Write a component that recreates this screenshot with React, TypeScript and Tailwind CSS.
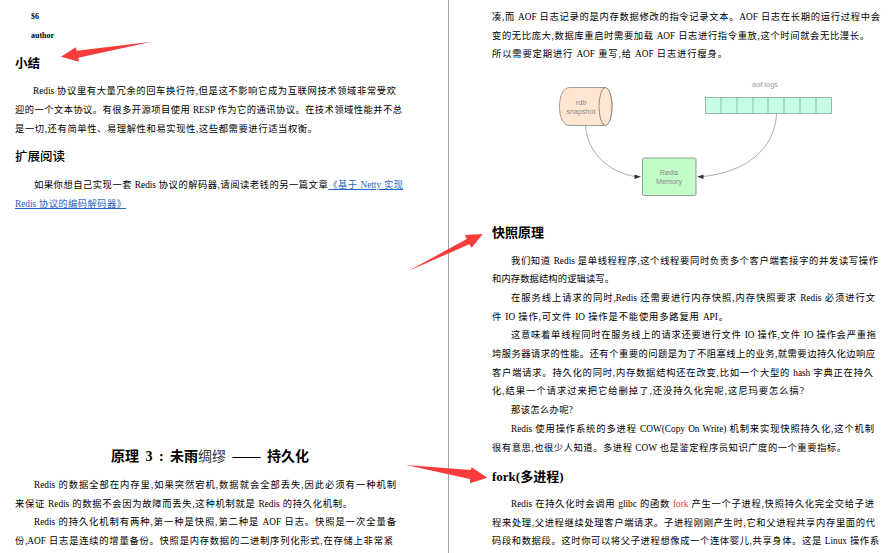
import type { ReactNode } from 'react';

const Line = ({ className, children }: { className: string; children: ReactNode }) => (
  <p className={`h-[18.7px] text-justify leading-[18.7px] [text-align-last:justify] ${className}`}>
    {children}
  </p>
);

const Heading = ({ className, children }: { className: string; children: ReactNode }) => (
  <h2 className={`h-5 leading-5 font-bold text-black ${className}`}>{children}</h2>
);

const RedisDiagram = () => (
  <svg width="399" height="140" viewBox="492 70 399 140" className="mt-[6px] block font-['Liberation_Sans',sans-serif]">
    <path d="M570 87.5H604C609 87.5 612 96 612 106.5C612 117 609 125.5 604 125.5H570C563 125.5 559.5 117 559.5 106.5C559.5 96 563 87.5 570 87.5Z" fill="#ffe6d2" stroke="#777" strokeWidth="0.7" />
    <ellipse cx="605.5" cy="106.5" rx="6.5" ry="19" fill="#ffe6d2" stroke="#666" strokeWidth="0.7" />
    <text x="581" y="105" textAnchor="middle" fontSize="7.2" fill="#888">rdb</text>
    <text x="581" y="114" textAnchor="middle" fontSize="7.2" fill="#888">snapshot</text>
    <text x="765" y="87" textAnchor="middle" fontSize="7.4" fill="#999">aof logs</text>
    <rect x="705.5" y="97.5" width="126" height="16" fill="#c6fde6" stroke="#7f9a90" strokeWidth="0.7" />
    {[721, 737, 753, 768, 784, 800, 816].map((x) => (
      <line key={x} x1={x} x2={x} y1="97.5" y2="113.5" stroke="#7f9a90" strokeWidth="0.7" />
    ))}
    <rect x="642.5" y="158" width="53.5" height="37.5" rx="1.5" fill="#c2fcc8" stroke="#7c8f7f" strokeWidth="0.8" />
    <text x="669" y="175" textAnchor="middle" fontSize="7.2" fill="#888">Redis</text>
    <text x="669" y="184" textAnchor="middle" fontSize="7.2" fill="#888">Memory</text>
    <path d="M585.5 125.5C587 152 608 172 635 176.5" fill="none" stroke="#777" strokeWidth="0.6" />
    <path d="M776.5 113.5C775 150 745 172 703 176.5" fill="none" stroke="#777" strokeWidth="0.6" />
    <path d="M641 176.7L634.5 174.5V179Z" fill="#333" />
    <path d="M697 176.7L703.5 174.5V179Z" fill="#333" />
  </svg>
);

const Arrows = () => (
  <svg width="891" height="553" className="pointer-events-none absolute top-0 left-0" fill="#f83c3c">
    <polygon points="151.7,41.7 76.7,50.7 75.7,47.3 61,56.7 79,61.7 78.3,57.7" />
    <polygon points="408.3,271 466.7,239 465,235 482.7,234 471.7,247.7 469.3,244.3" />
    <polygon points="406,465 470.7,470 471.7,467.3 487.3,477.7 470,483.3 470,479" />
  </svg>
);

export default function App() {
  return (
    <div className="relative flex h-[553px] w-[891px] overflow-hidden bg-white font-['Liberation_Serif','Noto_Sans_CJK_SC',serif] text-[9.3px] text-black">
      <section className="h-full w-[449px] shrink-0 border-r border-[#a3a3a3] pt-2 pl-[15px]">
        <p className="pl-4 text-[8px] leading-[18.7px] font-bold">$6</p>
        <p className="pl-4 text-[8px] leading-[18.7px] font-bold">author</p>
        <Heading className="mt-[8.3px] text-[12.5px]">小结</Heading>
        <div className="mt-[8.6px]">
          <Line className="w-[381px] pl-[18px]">Redis 协议里有大量冗余的回车换行符,但是这不影响它成为互联网技术领域非常受欢</Line>
          <Line className="w-[387px]">迎的一个文本协议。有很多开源项目使用 RESP 作为它的通讯协议。在技术领域性能并不总</Line>
          <Line className="w-[302px]">是一切,还有简单性、易理解性和易实现性,这些都需要进行适当权衡。</Line>
        </div>
        <Heading className="mt-[9px] text-[12.5px] font-medium">扩展阅读</Heading>
        <div className="mt-[8.6px]">
          <Line className="w-[388px] pl-[19px]">
            如果你想自己实现一套 Redis 协议的解码器,请阅读老钱的另一篇文章<span className="text-[#1f63c4] underline">《基于 Netty 实现</span>
          </Line>
          <Line className="w-[111px] text-[#1f63c4] underline">Redis 协议的编码解码器》</Line>
        </div>
        <h1 className="mt-[233px] h-[22px] w-[390px] text-center text-[14px] leading-[22px] font-bold text-black [word-spacing:3px]">
          原理 3 : 未雨<span className="font-normal text-[#333]">绸缪</span> —— 持久化
        </h1>
        <div className="mt-[7.6px]">
          <Line className="w-[381px] pl-[19px]">Redis 的数据全部在内存里,如果突然宕机,数据就会全部丢失,因此必须有一种机制</Line>
          <Line className="w-[337px]">来保证 Redis 的数据不会因为故障而丢失,这种机制就是 Redis 的持久化机制。</Line>
          <Line className="w-[381px] pl-[19px]">Redis 的持久化机制有两种,第一种是快照,第二种是 AOF 日志。快照是一次全量备</Line>
          <Line className="w-[378px]">份,AOF 日志是连续的增量备份。快照是内存数据的二进制序列化形式,在存储上非常紧</Line>
        </div>
      </section>

      <section className="h-full flex-1 pt-2 pl-[43px]">
        <Line className="w-[388px]">凑,而 AOF 日志记录的是内存数据修改的指令记录文本。AOF 日志在长期的运行过程中会</Line>
        <Line className="w-[377px]">变的无比庞大,数据库重启时需要加载 AOF 日志进行指令重放,这个时间就会无比漫长。</Line>
        <Line className="w-[235px]">所以需要定期进行 AOF 重写,给 AOF 日志进行瘦身。</Line>
        <RedisDiagram />
        <Heading className="mt-[13px] text-[13px]">快照原理</Heading>
        <div className="mt-[8.6px]">
          <Line className="w-[386px] pl-[19px]">我们知道 Redis 是单线程程序,这个线程要同时负责多个客户端套接字的并发读写操作</Line>
          <Line className="w-[122px]">和内存数据结构的逻辑读写。</Line>
          <Line className="w-[383px] pl-[19px]">在服务线上请求的同时,Redis 还需要进行内存快照,内存快照要求 Redis 必须进行文</Line>
          <Line className="w-[236px]">件 IO 操作,可文件 IO 操作是不能使用多路复用 API。</Line>
          <Line className="w-[384px] pl-[19px]">这意味着单线程同时在服务线上的请求还要进行文件 IO 操作,文件 IO 操作会严重拖</Line>
          <Line className="w-[383px]">垮服务器请求的性能。还有个重要的问题是为了不阻塞线上的业务,就需要边持久化边响应</Line>
          <Line className="w-[381px]">客户端请求。持久化的同时,内存数据结构还在改变,比如一个大型的 hash 字典正在持久</Line>
          <Line className="w-[312px]">化,结果一个请求过来把它给删掉了,还没持久化完呢,这尼玛要怎么搞?</Line>
          <Line className="w-[81px] pl-[19px]">那该怎么办呢?</Line>
          <Line className="w-[382px] pl-[19px]">Redis 使用操作系统的多进程 COW(Copy On Write) 机制来实现快照持久化,这个机制</Line>
          <Line className="w-[354px]">很有意思,也很少人知道。多进程 COW 也是鉴定程序员知识广度的一个重要指标。</Line>
        </div>
        <Heading className="mt-[10px] text-[13px]">fork(多进程)</Heading>
        <div className="mt-[7.6px]">
          <Line className="w-[382px] pl-[19px]">
            Redis 在持久化时会调用 glibc 的函数 <span className="text-[#f0303c]">fork</span> 产生一个子进程,快照持久化完全交给子进
          </Line>
          <Line className="w-[383px]">程来处理,父进程继续处理客户端请求。子进程刚刚产生时,它和父进程共享内存里面的代</Line>
          <Line className="w-[387px]">码段和数据段。这时你可以将父子进程想像成一个连体婴儿,共享身体。这是 Linux 操作系</Line>
        </div>
      </section>
      <Arrows />
    </div>
  );
}
